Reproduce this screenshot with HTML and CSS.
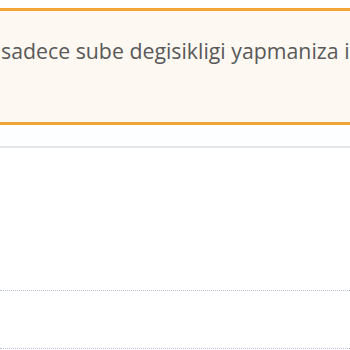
FILE: index.html
```html
<!DOCTYPE html>
<html lang="tr">
<head>
  <meta charset="UTF-8" />
  <meta name="viewport" content="width=device-width, initial-scale=1.0"/>
  <link rel="stylesheet" href="styles.css">
  <title>Sube Degisikligi</title>
</head>
<body>
  <div class="page">
    <!-- Uyari kutusu -->
    <div class="alert-box">
      <p class="alert-text">sadece sube degisikligi yapmaniza izin verilmektedir.</p>
    </div>

    <div class="panel">
      <div class="panel-head"></div>
      <div class="panel-body">
        <div class="panel-row"></div>
        <div class="panel-row"></div>
      </div>
    </div>
  </div>
</body>
</html>
```

FILE: styles.css
```css
* {
  box-sizing: border-box;
}

html, body {
  margin: 0;
  padding: 0;
  height: 100%;
  overflow: hidden;
  background: #ffffff;
  font-family: 'Open Sans', 'Liberation Sans', sans-serif;
}

:root {
  --alert-border: #f2a534;
  --alert-bg: #fdf8f1;
  --text-color: #595959;
  --line-color: #e6e7ec;
  --dotted-color: #b9c3d2;
}

.page {
  padding-top: 8px;
}

.alert-box {
  height: 117px;
  background: var(--alert-bg);
  border-top: 3px solid var(--alert-border);
  border-bottom: 3px solid var(--alert-border);
  padding: 25px 0 0 1px;
  overflow: hidden;
}

.alert-text {
  margin: 0;
  font-size: 21.3px;
  line-height: 30px;
  color: var(--text-color);
  white-space: nowrap;
}

.panel-head {
  height: 23px;
  background: #fcfeff;
  border-bottom: 2px solid var(--line-color);
}

.panel-body {
  padding-top: 142px;
}

.panel-row {
  height: 58px;
  border-top: 1px dotted var(--dotted-color);
}
```
